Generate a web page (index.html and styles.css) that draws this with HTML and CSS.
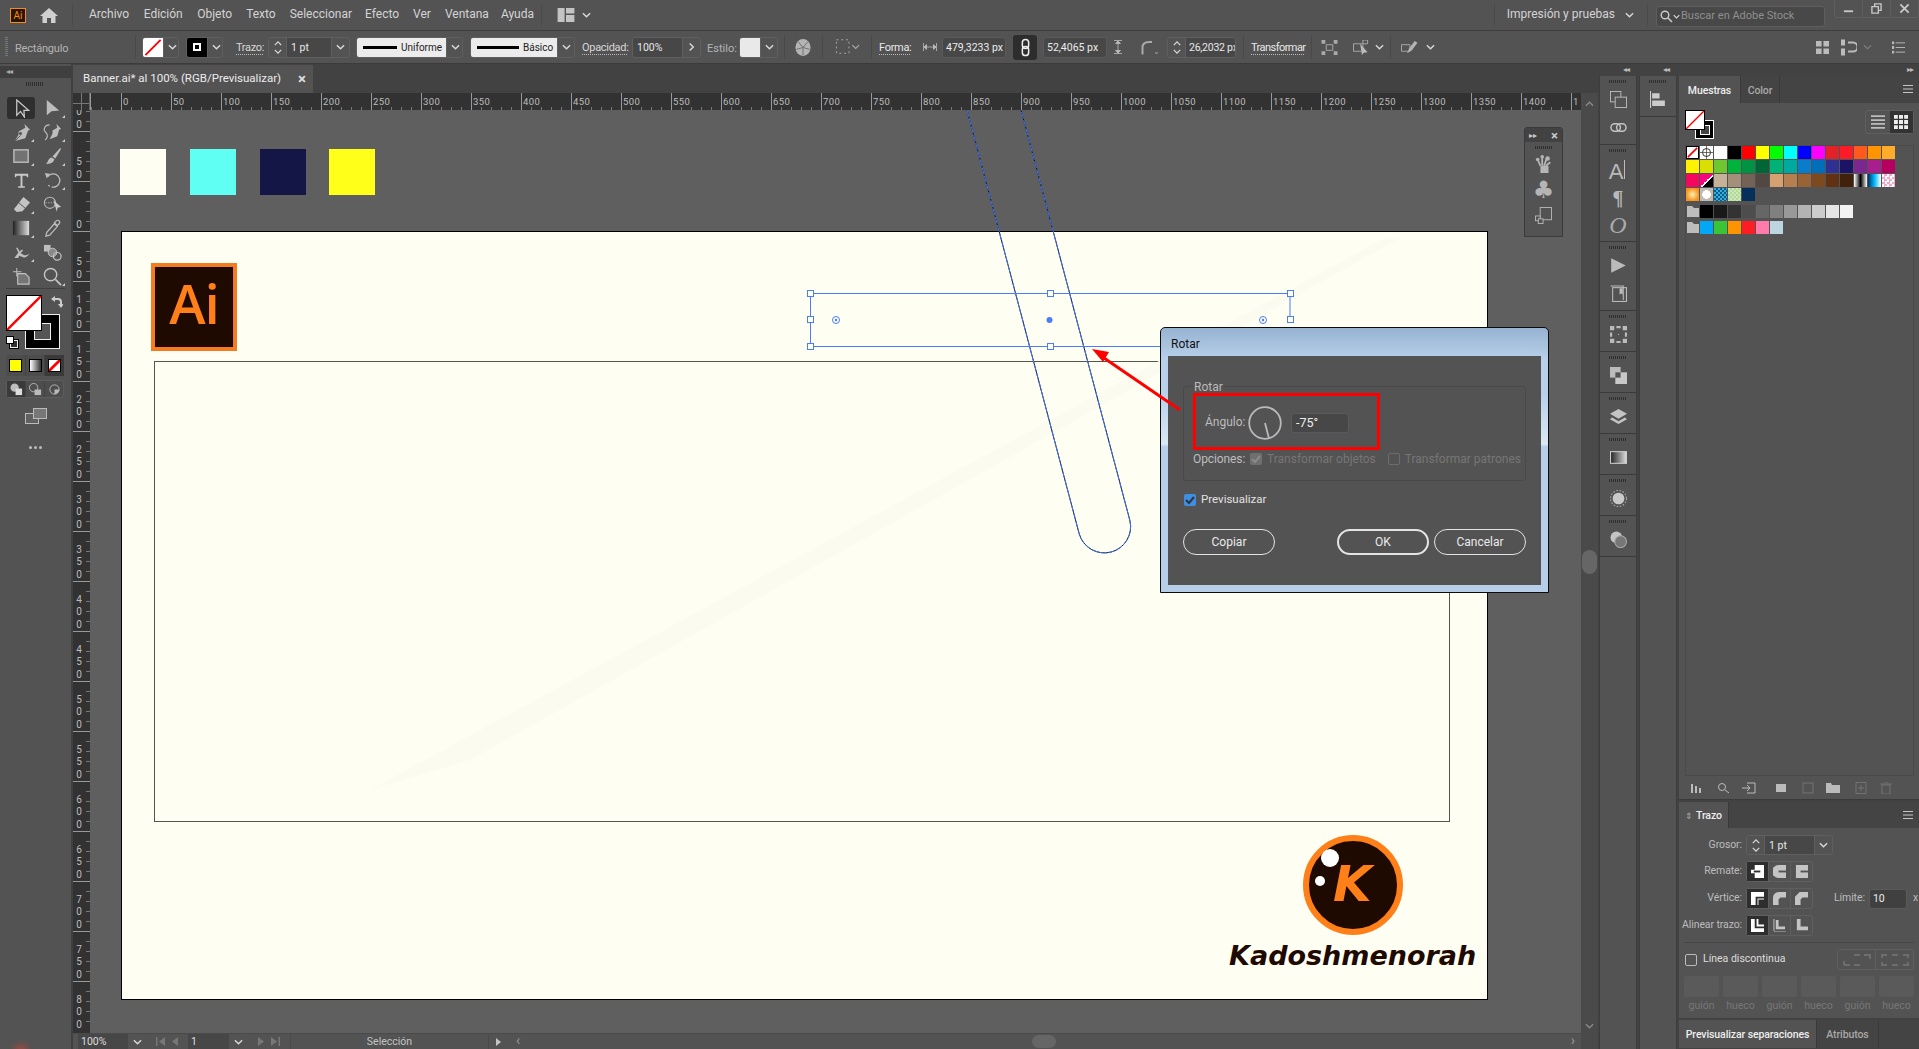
FILE: index.html
```html
<!DOCTYPE html>
<html lang="es">
<head>
<meta charset="utf-8">
<title>Banner.ai</title>
<link rel="stylesheet" href="styles.css">
</head>
<body>
<svg class="defs" width="0" height="0" aria-hidden="true">
  <symbol id="chev" viewBox="0 0 10 6"><path d="M1 1l4 4 4-4" fill="none" stroke="currentColor" stroke-width="1.6"/></symbol>
  <symbol id="up" viewBox="0 0 10 6"><path d="M1 5l4-4 4 4" fill="none" stroke="currentColor" stroke-width="1.6"/></symbol>
  <symbol id="lay" viewBox="0 0 12 10"><path d="M0 0h5v10H0zM6 0h6v4H6zM6 5h6v5H6z" fill="currentColor"/></symbol>
  <symbol id="burger" viewBox="0 0 10 8"><path d="M0 .5h10M0 4h10M0 7.500h10" stroke="currentColor"/></symbol>
  <symbol id="folder" viewBox="0 0 14 13"><path d="M1 1h5l2 2h5v9H1z" fill="#bdbdbd"/></symbol>
</svg>
<div class="app">
  <header class="menubar">
    <span class="ai-mini">Ai</span>
    <svg class="home" viewBox="0 0 18 15"><path d="M9 0l9 8h-2.500v7H11v-5H7v5H2.500V8H0z" fill="currentColor"/></svg>
    <span class="vsep home-sep"></span>
    <nav class="menus">
      <span class="m2">Archivo</span><span class="m2">Edición</span><span>Objeto</span><span>Texto</span><span class="m5">Seleccionar</span><span>Efecto</span><span>Ver</span><span class="m8">Ventana</span><span>Ayuda</span>
    </nav>
    <span class="vsep lay-sep"></span>
    <svg class="lay"><use href="#lay"/></svg>
    <svg class="chev lay-chev"><use href="#chev"/></svg>
    <span class="spacer"></span>
    <span class="vsep"></span>
    <span class="workspace">Impresión y pruebas</span>
    <svg class="chev ws-chev"><use href="#chev"/></svg>
    <span class="vsep ws-sep"></span>
    <div class="stock">
      <svg class="stock-ico" viewBox="0 0 13 13"><circle cx="5" cy="5" r="3.800" fill="none" stroke="currentColor" stroke-width="1.400"/><path d="M8 8l4 4" stroke="currentColor" stroke-width="1.600"/></svg>
      <svg class="chev"><use href="#chev"/></svg>
      <span>Buscar en Adobe Stock</span>
    </div>
    <div class="winbtns">
      <span><svg viewBox="0 0 12 12"><path d="M1 8h10v2H1z" fill="currentColor"/></svg></span>
      <span><svg viewBox="0 0 12 12"><path d="M1 4h7v7H1zM4 4V1h7v7H8" fill="none" stroke="currentColor" stroke-width="1.500"/></svg></span>
      <span><svg viewBox="0 0 12 12"><path d="M1.500 1.500l9 9M10.500 1.500l-9 9" stroke="currentColor" stroke-width="2"/></svg></span>
    </div>
  </header>

  <section class="ctl">
    <span class="grip-v"></span>
    <span class="lbl dim name">Rectángulo</span>
    <span class="sep"></span>
    <div class="combo ml6 w37">
      <span class="swatch-none"><svg viewBox="0 0 20 20"><path d="M2 18L18 2" stroke="#f00" stroke-width="2"/></svg></span>
      <span class="drop"><svg class="chev"><use href="#chev"/></svg></span>
    </div>
    <div class="combo ml7 w37">
      <span class="swatch-stroke"><i></i></span>
      <span class="drop"><svg class="chev"><use href="#chev"/></svg></span>
    </div>
    <span class="lbl dotted ml13 w27">Trazo:</span>
    <div class="combo ml5 w82">
      <span class="stepper"><svg class="chev"><use href="#up"/></svg><svg class="chev"><use href="#chev"/></svg></span>
      <span class="val grow">1 pt</span>
      <span class="drop"><svg class="chev"><use href="#chev"/></svg></span>
    </div>
    <div class="combo ml6 w107">
      <span class="lineopt w89"><b class="w34"></b>Uniforme</span>
      <span class="drop"><svg class="chev"><use href="#chev"/></svg></span>
    </div>
    <div class="combo ml7 w105">
      <span class="lineopt w86"><b class="w42"></b>Básico</span>
      <span class="drop"><svg class="chev"><use href="#chev"/></svg></span>
    </div>
    <span class="lbl dotted ml7 w45">Opacidad:</span>
    <div class="combo ml5 w69">
      <span class="val grow">100%</span>
      <span class="drop"><svg class="chev rot"><use href="#chev"/></svg></span>
    </div>
    <span class="lbl dim ml6 w26">Estilo:</span>
    <div class="combo ml6 w39">
      <span class="swatch-light"></span>
      <span class="drop grow"><svg class="chev"><use href="#chev"/></svg></span>
    </div>
    <span class="sep ml6"></span>
    <svg class="ic16 ml10" viewBox="0 0 16 18"><ellipse cx="8" cy="9" rx="8" ry="9" fill="#b4b4b4"/><path d="M8 9L3 3M8 9l5-6M8 9v8M8 9L1 11M8 9l7 2" stroke="#6f6f6f"/></svg>
    <span class="sep ml11"></span>
    <svg class="ic20 ml12" viewBox="0 0 26 18"><rect x="1.500" y="1.500" width="13" height="14" fill="none" stroke="#aaa" stroke-dasharray="2 3"/><path d="M18 7l3.500 3.500L25 7" fill="none" stroke="#aaa" stroke-width="1.200"/></svg>
    <span class="sep ml11"></span>
    <span class="lbl dotted bright ml7 w31">Forma:</span>
    <svg class="ic14 ml13" viewBox="0 0 14 8"><path d="M.5 0v8M13.500 0v8M1 4h12M3.500 1.500v5L1 4zM10.500 1.500v5L13 4z" fill="#bbb" stroke="#bbb" stroke-width=".8"/></svg>
    <span class="input ml5 w64">479,3233 px</span>
    <span class="link ml7"><svg viewBox="0 0 10 20"><rect x="1.500" y="1" width="7" height="10" rx="3.500" fill="none" stroke="#eee" stroke-width="1.700"/><rect x="1.500" y="9" width="7" height="10" rx="3.500" fill="none" stroke="#eee" stroke-width="1.700"/></svg></span>
    <span class="input ml6 w64">52,4065 px</span>
    <svg class="ic8 ml7" viewBox="0 0 8 14"><path d="M0 .5h8M0 13.500h8M4 1v12M1.500 3.500h5L4 1zM1.500 10.500h5L4 13z" fill="#bbb" stroke="#bbb" stroke-width=".8"/></svg>
    <svg class="ic17 ml19" viewBox="0 0 17 14"><path d="M1.500 14V7Q1.500 1.500 8 1.500h3" fill="none" stroke="#aaa" stroke-width="2"/><path d="M14 13h3v-1h-3z" fill="#aaa"/></svg>
    <div class="combo ml9 w69">
      <span class="stepper"><svg class="chev"><use href="#up"/></svg><svg class="chev"><use href="#chev"/></svg></span>
      <span class="val clip">26,2032 px</span>
    </div>
    <span class="sep ml7"></span>
    <span class="lbl dotted bright tight ml7 w53">Transformar</span>
    <span class="sep ml7"></span>
    <svg class="ic17 ml9" viewBox="0 0 17 16"><path d="M5 5h7v6H5z" fill="none" stroke="#aaa"/><path d="M0 0h4v4H0zM13 0h4v4h-4zM0 12h4v4H0zM13 12h4v4h-4z" fill="#aaa"/></svg>
    <svg class="ic17 ml15" viewBox="0 0 17 16"><path d="M0 4h10v8H0z" fill="none" stroke="#aaa"/><path d="M7 4l8 9-4 .5-2 2.500z" fill="#bbb"/><path d="M10 0h5v4h-5z" fill="none" stroke="#aaa"/></svg>
    <svg class="chev ml5"><use href="#chev"/></svg>
    <span class="sep ml6"></span>
    <svg class="ic17 ml10" viewBox="0 0 17 16"><path d="M0 5h9v7H0z" fill="none" stroke="#aaa"/><path d="M6 14l2-5 6-8 3 2-6 8z" fill="#b5b5b5"/></svg>
    <svg class="chev ml8"><use href="#chev"/></svg>
    <span class="spacer"></span>
    <svg class="ic13 rgt1" viewBox="0 0 14 14"><path d="M0 0h6v6H0zM8 0h6v6H8zM0 8h6v6H0zM8 8h6v6H8z" fill="#bbb"/></svg>
    <svg class="ic16 rgt2" viewBox="0 0 16 16"><path d="M0 0h4v6H0zM0 9h4v7H0z" fill="#bbb"/><path d="M7 3h5a3 3 0 010 9H7" fill="none" stroke="#bbb" stroke-width="2"/></svg>
    <svg class="chev rgt3 faint"><use href="#chev"/></svg>
    <svg class="ic13 rgt4" viewBox="0 0 14 12"><path d="M0 0h2v2H0zM4 1h10M0 5h2v2H0zM4 6h10M0 10h2v2H0zM4 11h10" stroke="#bbb" fill="#bbb"/></svg>
  </section>

  <main class="main">
    <aside class="tools">
      <div class="tools-head"><span class="arrows">◂◂</span></div>
      <div class="grip g-tools"></div>
      <div class="toolgrid">
        <span class="tool on"><svg viewBox="0 0 20 20"><path d="M5 1v16l4-4 4 6-.5-7h5z" fill="none" stroke="#ccc" stroke-width="1.300"/></svg></span>
        <span class="tool"><svg viewBox="0 0 20 20"><path d="M4 1v16l5-4 8-1z" fill="#bdbdbd"/></svg><u></u></span>
        <span class="tool"><svg viewBox="0 0 20 20"><path d="M13 1l6 6-2 1-3 8-11 3 4-7 0-3 7-4z" fill="#bdbdbd"/><path d="M3 19l6-6" stroke="#535353"/><circle cx="9" cy="11" r="1.500" fill="#535353"/></svg><u></u></span>
        <span class="tool"><svg viewBox="0 0 20 20"><path d="M14 1l5 5-2 1-2 7-8 3 3-6 0-3 5-3z" fill="#bdbdbd"/><path d="M7 2C1 2 0 8 3 10c3 3 1 7-1 8" fill="none" stroke="#bdbdbd" stroke-width="1.200"/></svg><u></u></span>
        <span class="tool"><svg viewBox="0 0 20 20"><rect x="2" y="3" width="15" height="13" fill="#727272" stroke="#c2c2c2" stroke-width="1.400"/></svg><u></u></span>
        <span class="tool"><svg viewBox="0 0 20 20"><path d="M18 1l1 1-6 10-3-2zM9 11l3 2c-1 4-5 5-9 5 2-1 2-6 6-7z" fill="#bdbdbd"/></svg><u></u></span>
        <span class="tool"><svg viewBox="0 0 20 20"><path d="M3 3h14v3.500h-1L15 5h-4v11h2.500v1.500h-7V16H9V5H5L4 6.500H3z" fill="#c9c9c9"/></svg><u></u></span>
        <span class="tool"><svg viewBox="0 0 20 20"><path d="M5 6a7 7 0 11-1 6" fill="none" stroke="#bdbdbd" stroke-width="1.300" stroke-dasharray="30 2 2"/><path d="M2 2l5 1-3 5z" fill="#bdbdbd"/></svg><u></u></span>
        <span class="tool"><svg viewBox="0 0 20 20"><path d="M12 2l7 6-8 9-6 1-3-3z" fill="#c4c4c4"/><path d="M7 8l7 6" stroke="#535353"/></svg><u></u></span>
        <span class="tool"><svg viewBox="0 0 22 20"><circle cx="8" cy="8" r="6.500" fill="none" stroke="#bdbdbd" stroke-width="1.200"/><path d="M3 8h10" stroke="#bdbdbd" stroke-dasharray="1.500 1.500"/><path d="M12 5l9 8-4 .5-1 5z" fill="#c9c9c9"/></svg></span>
        <span class="tool"><svg viewBox="0 0 20 20"><defs><linearGradient id="gt"><stop offset="0" stop-color="#222"/><stop offset="1" stop-color="#ddd"/></linearGradient></defs><rect x="1" y="2" width="17" height="15" fill="url(#gt)"/></svg><u></u></span>
        <span class="tool"><svg viewBox="0 0 20 20"><path d="M14 2c2-2 5 1 3 3l-2 2-3-3zM12 5l3 3-8 9-4 1 1-4z" fill="none" stroke="#bdbdbd" stroke-width="1.300"/></svg></span>
        <span class="tool"><svg viewBox="0 0 24 20"><path d="M5 4l3 6-5 7h5l1-3 5 2c3 1 6-1 8-5-2 2-4 3-7 2l-4-2 3-4c-2-1-3 0-4 2L7 4z" fill="#bdbdbd"/></svg><u></u></span>
        <span class="tool"><svg viewBox="0 0 20 20"><path d="M1 2h7v7H1z" fill="#bdbdbd"/><circle cx="10" cy="10" r="4.500" fill="#8a8a8a" stroke="#c4c4c4"/><circle cx="15" cy="14" r="4" fill="none" stroke="#c4c4c4" stroke-width="1.300"/></svg></span>
        <span class="tool"><svg viewBox="0 0 20 20"><path d="M6 7h8l4 4v7H6z" fill="#757575" stroke="#c2c2c2" stroke-width="1.200"/><path d="M5 1v9M1 5h9" stroke="#c2c2c2"/></svg></span>
        <span class="tool"><svg viewBox="0 0 20 20"><circle cx="8" cy="8" r="6.500" fill="none" stroke="#c4c4c4" stroke-width="1.500"/><path d="M13 13l6 6" stroke="#c4c4c4" stroke-width="1.800"/></svg><u></u></span>
      </div>
      <div class="rule"></div>
      <div class="fillstroke">
        <span class="fs-stroke"><i></i></span>
        <span class="fs-fill"><svg viewBox="0 0 36 36"><path d="M0 36L36 0" stroke="#f00" stroke-width="2.500"/></svg></span>
        <svg class="fs-swap" viewBox="0 0 12 12"><path d="M1 3h6q3 0 3 3v5" fill="none" stroke="#ccc" stroke-width="2"/><path d="M4 0v6L0 3zM7 8h6l-3 4z" fill="#ccc"/></svg>
        <span class="fs-def"><b></b><em></em></span>
      </div>
      <div class="segs colormodes">
        <span><i class="cm-yellow"></i></span>
        <span><i class="cm-grad"></i></span>
        <span class="seg-on"><i class="cm-none"><svg viewBox="0 0 12 12"><path d="M0 12L12 0" stroke="#f00" stroke-width="3"/></svg></i></span>
      </div>
      <div class="segs drawmodes">
        <span class="seg-on"><svg viewBox="0 0 14 14"><circle cx="5" cy="5" r="4.500" fill="#bdbdbd"/><rect x="6" y="6" width="7" height="7" fill="#ddd"/></svg></span>
        <span><svg viewBox="0 0 14 14"><circle cx="5" cy="5" r="4.500" fill="none" stroke="#bbb"/><rect x="6" y="7" width="7" height="6" fill="#bbb"/></svg></span>
        <span><svg viewBox="0 0 14 14"><circle cx="7" cy="7" r="5" fill="none" stroke="#bbb"/><path d="M7 7h5a5 5 0 01-5 5z" fill="#bbb"/></svg></span>
      </div>
      <svg class="screenmode" viewBox="0 0 22 16"><rect x=".5" y="5.500" width="13" height="10" fill="#606060" stroke="#bbb"/><rect x="8.500" y=".5" width="13" height="10" fill="#777" stroke="#bbb"/></svg>
      <div class="more"><i></i><i></i><i></i></div>
      <span class="glow"></span>
    </aside>

    <section class="doc">
      <div class="tabrow">
        <div class="tab"><span>Banner.ai* al 100% (RGB/Previsualizar)</span><b>×</b></div>
      </div>
      <div class="docbody">
        <div class="docmain">
          <div class="rulerrow">
            <div class="corner"></div>
            <div class="hruler">
              <span class="hfirst"></span><span>0</span><span>50</span><span>100</span><span>150</span><span>200</span><span>250</span><span>300</span><span>350</span><span>400</span><span>450</span><span>500</span><span>550</span><span>600</span><span>650</span><span>700</span><span>750</span><span>800</span><span>850</span><span>900</span><span>950</span><span>1000</span><span>1050</span><span>1100</span><span>1150</span><span>1200</span><span>1250</span><span>1300</span><span>1350</span><span>1400</span><span>1</span>
            </div>
          </div>
          <div class="canvasrow">
            <div class="vruler">
              <div class="vinner">
                <span>100</span><span>50</span><span>0</span><span>50</span><span>100</span><span>150</span><span>200</span><span>250</span><span>300</span><span>350</span><span>400</span><span>450</span><span>500</span><span>550</span><span>600</span><span>650</span><span>700</span><span>750</span><span>800</span>
              </div>
            </div>
            <div class="canvas">
              <span class="cs cs1"></span><span class="cs cs2"></span><span class="cs cs3"></span><span class="cs cs4"></span>
              <div class="artboard">
                <div class="ailogo">Ai</div>
                <div class="innerbox"></div>
                <div class="klogo"><i class="b1"></i><i class="b2"></i><span>K</span></div>
                <div class="kname">Kadoshmenorah</div>
              </div>
              <svg class="overlay" viewBox="90 110 1491 923">
                <polygon points="370,790 1385,238 1400,238 470,760" fill="#fbfbef"/>
                <path d="M967 110L1079.200 533.800A26.200 26.200 0 0 0 1129.800 520.200L1021 110" fill="none" stroke="#111" stroke-width="1"/>
                <path d="M967 110L1079.200 533.800A26.200 26.200 0 0 0 1129.800 520.200L1021 110" fill="none" stroke="#3f74ff" stroke-width="1" stroke-dasharray="7 1.500"/>
                <path d="M810.500 293.500H1290V320M810.500 293.500V346.500H1170" fill="none" stroke="#4a7cff" stroke-width="1"/>
                <g fill="#fff" stroke="#4a7cff">
                  <rect x="807.500" y="290.500" width="6" height="6"/><rect x="1047.500" y="290.500" width="6" height="6"/><rect x="1287.500" y="290.500" width="6" height="6"/>
                  <rect x="807.500" y="316.500" width="6" height="6"/><rect x="1287.500" y="316.500" width="6" height="6"/>
                  <rect x="807.500" y="343.500" width="6" height="6"/><rect x="1047.500" y="343.500" width="6" height="6"/>
                  <circle cx="836" cy="320" r="3.500" fill="none"/><circle cx="1263" cy="320" r="3.500" fill="none"/>
                </g>
                <circle cx="836" cy="320" r="1.200" fill="#4a7cff"/><circle cx="1263" cy="320" r="1.200" fill="#4a7cff"/><circle cx="1049.500" cy="320" r="3" fill="#4a7cff"/>
              </svg>

              <div class="floatpanel">
                <div class="fp-head"><span>▸▸</span><b>×</b></div>
                <div class="grip g-fp"></div>
                <svg class="fp-ic" viewBox="0 0 20 22"><path d="M6 13h9v8H6z" fill="#b5b5b5"/><path d="M8 13V3M10 13L13 5M12 13l5-4M6 13L3 6" stroke="#b5b5b5" stroke-width="2"/><circle cx="8" cy="3" r="2" fill="#b5b5b5"/><circle cx="14" cy="5" r="2.500" fill="#b5b5b5"/><circle cx="3" cy="6" r="2" fill="#b5b5b5"/></svg>
                <span class="fp-club">♣</span>
                <svg class="fp-ic fp-last" viewBox="0 0 18 18"><rect x="5.500" y=".5" width="12" height="13" fill="none" stroke="#b5b5b5"/><rect x=".5" y="9.500" width="5" height="5" fill="#535353" stroke="#b5b5b5"/><rect x="3.500" y="12.500" width="5" height="5" fill="#535353" stroke="#b5b5b5"/></svg>
              </div>

              <div class="dialog">
                <div class="dlg-title">Rotar</div>
                <div class="dlg-body">
                  <div class="fieldset">
                    <span class="legend">Rotar</span>
                    <div class="anglerow">
                      <span class="anglelbl">Ángulo:</span>
                      <svg class="dial" viewBox="0 0 34 34"><circle cx="17" cy="17" r="15.800" fill="none" stroke="#b9b9b9" stroke-width="1.800"/><path d="M17 17l4 15.500" stroke="#b9b9b9" stroke-width="1.800"/></svg>
                      <span class="angleinput">-75°</span>
                    </div>
                    <div class="optrow">
                      <span class="optlbl">Opciones:</span>
                      <span class="chk chk-dis"><svg viewBox="0 0 12 12"><path d="M2 6l3 3 5-6" fill="none" stroke="#8a8a8a" stroke-width="2"/></svg></span>
                      <span class="optdis">Transformar objetos</span>
                      <span class="chk chk-empty"></span>
                      <span class="optdis">Transformar patrones</span>
                    </div>
                    <span class="redbox"></span>
                  </div>
                  <div class="prevrow">
                    <span class="chk chk-blue"><svg viewBox="0 0 12 12"><path d="M2 6l3 3 5-6" fill="none" stroke="#333" stroke-width="2"/></svg></span>
                    <span>Previsualizar</span>
                  </div>
                  <div class="btnrow">
                    <span class="btn">Copiar</span>
                    <span class="btn btn-def">OK</span>
                    <span class="btn">Cancelar</span>
                  </div>
                </div>
              </div>
              <svg class="overlay" viewBox="90 110 1491 923">
                <path d="M1180 410L1104 358" stroke="#f00" stroke-width="3"/>
                <path d="M1092 349l17 3-6 10z" fill="#f00"/>
              </svg>
            </div>
          </div>
          <div class="status">
            <span class="st-zoom">100%</span><span class="st-drop"><svg class="chev"><use href="#chev"/></svg></span>
            <span class="st-nav"><svg viewBox="0 0 22 9"><path d="M0 0h1.500v9H0zM9 0v9L3 4.500zM22 0v9l-6-4.500z" fill="#777"/></svg></span>
            <span class="st-page">1</span><span class="st-drop"><svg class="chev"><use href="#chev"/></svg></span>
            <span class="st-nav nav2"><svg viewBox="0 0 22 9"><path d="M0 0l6 4.500L0 9zM13 0l6 4.500L13 9zM20.500 0H22v9h-1.500z" fill="#777"/></svg></span>
            <span class="st-tool">Selección</span>
            <span class="st-tri"></span>
            <span class="st-left">‹</span>
            <span class="st-thumb"></span>
            <span class="st-right">›</span>
          </div>
        </div>
        <div class="vscroll">
          <svg class="chev vs-up"><use href="#up"/></svg>
          <span class="vs-thumb"></span>
          <svg class="chev vs-down"><use href="#chev"/></svg>
        </div>
      </div>
    </section>

    <aside class="dock">
      <div class="dock-head"><span class="da1">◂◂</span><span class="da2">◂◂</span><span class="da3">▸▸</span></div>
      <div class="dock-cols">
        <div class="icol">
          <div class="igroup h69"><i class="grip"></i>
            <svg class="di" viewBox="0 0 18 18"><rect x=".5" y=".5" width="11" height="11" fill="none" stroke="#bbb"/><rect x="5.500" y="6.500" width="12" height="11" fill="#535353" stroke="#bbb"/></svg>
            <svg class="di mt8" viewBox="0 0 18 10"><rect x="1" y="1" width="10" height="8" rx="4" fill="none" stroke="#c4c4c4" stroke-width="1.500"/><rect x="7" y="1" width="10" height="8" rx="4" fill="none" stroke="#c4c4c4" stroke-width="1.500"/></svg>
          </div>
          <div class="igroup h97"><i class="grip"></i>
            <span class="di-a">A<u></u></span>
            <span class="di-p">¶</span>
            <span class="di-o">O</span>
          </div>
          <div class="igroup h69"><i class="grip"></i>
            <svg class="di" viewBox="0 0 14 14"><path d="M1 1l12 6-12 6z" fill="#bbb"/></svg>
            <svg class="di mt8" viewBox="0 0 16 16"><path d="M.5 1h12v13" fill="none" stroke="#bbb"/><rect x="2.500" y="2.500" width="13" height="13" fill="none" stroke="#bbb"/><path d="M9 3h3v6l-1.500-1L9 9z" fill="#bbb"/></svg>
          </div>
          <div class="igroup h41"><i class="grip"></i><svg class="di" viewBox="0 0 16 16"><path d="M0 0h4v4H0zM12 0h4v4h-4zM0 12h4v4H0zM12 12h4v4h-4zM6 0h4v2H6zM6 14h4v2H6zM0 6h2v4H0zM14 6h2v4h-2z" fill="#bbb"/><path d="M7.500 7.500h1v1h-1z" fill="#bbb"/></svg></div>
          <div class="igroup h41"><i class="grip"></i><svg class="di" viewBox="0 0 16 16"><path d="M0 0h10v10H0z" fill="#bbb"/><path d="M5 5h11v11H5z" fill="#c8c8c8"/><path d="M5 5h5v5H5z" fill="#535353"/></svg></div>
          <div class="igroup h41"><i class="grip"></i><svg class="di" viewBox="0 0 16 16"><path d="M8 1l8 4.500L8 10 0 5.500z" fill="#c4c4c4"/><path d="M2 9l6 3.500L14 9l2 1.500L8 15l-8-4.500z" fill="#c4c4c4"/></svg></div>
          <div class="igroup h41"><i class="grip"></i><svg class="di" viewBox="0 0 16 12"><defs><linearGradient id="gd"><stop offset="0" stop-color="#222"/><stop offset="1" stop-color="#ddd"/></linearGradient></defs><rect x=".5" y=".5" width="15" height="11" fill="url(#gd)" stroke="#ccc"/></svg></div>
          <div class="igroup h41"><i class="grip"></i><svg class="di" viewBox="0 0 16 16"><circle cx="8" cy="8" r="5.500" fill="#c9c9c9"/><circle cx="8" cy="8" r="7.500" fill="none" stroke="#aaa" stroke-dasharray="1.500 1.500"/></svg></div>
          <div class="igroup h41"><i class="grip"></i><svg class="di" viewBox="0 0 16 16"><circle cx="6" cy="6" r="5.500" fill="#c4c4c4"/><circle cx="10" cy="10" r="5.500" fill="#777" stroke="#aaa"/></svg></div>
        </div>
        <div class="icol col2">
          <div class="igroup h41"><i class="grip"></i><svg class="di" viewBox="0 0 16 16"><path d="M.5 0v16" stroke="#ccc"/><path d="M2 2h7v5H2zM2 9h12v5H2z" fill="#ccc"/></svg></div>
        </div>
        <div class="panels">
          <section class="swatches">
            <div class="ptabs">
              <span class="ptab on w62">Muestras</span>
              <span class="ptab w39">Color</span>
              <span class="spacer"></span>
              <svg class="burger"><use href="#burger"/></svg>
            </div>
            <div class="sw-top">
              <div class="mini">
                <span class="mini-s"><i></i></span>
                <span class="mini-f"><svg viewBox="0 0 19 19"><path d="M0 19L19 0" stroke="#f00" stroke-width="1.500"/></svg></span>
              </div>
              <div class="viewbtns">
                <span><svg viewBox="0 0 12 12"><path d="M0 1h12M0 4.300h12M0 7.700h12M0 11h12" stroke="#bbb" stroke-width="1.500"/></svg></span>
                <span class="on"><svg viewBox="0 0 12 12"><path d="M0 0h3.300v3.300H0zM4.300 0h3.400v3.300H4.300zM8.700 0H12v3.300H8.700zM0 4.300h3.300v3.400H0zM4.300 4.300h3.400v3.400H4.300zM8.700 4.300H12v3.400H8.700zM0 8.700h3.300V12H0zM4.300 8.700h3.400V12H4.300zM8.700 8.700H12V12H8.700z" fill="#eee"/></svg></span>
              </div>
            </div>
            <div class="sw-box">
              <div class="swgrid">
                <span class="s-none"><svg viewBox="0 0 13 13"><path d="M1 12L12 1" stroke="#f00" stroke-width="2"/></svg></span>
                <span class="s-reg"><svg viewBox="0 0 13 13"><circle cx="6.500" cy="6.500" r="4" fill="none" stroke="#333"/><path d="M6.500 0v13M0 6.500h13" stroke="#333" stroke-width=".7"/></svg></span>
                <span style="background:#fff"></span><span style="background:#000"></span><span style="background:#f00"></span><span style="background:#ff0"></span><span style="background:#0f0"></span><span style="background:#0ff"></span><span style="background:#00f"></span><span style="background:#f0f"></span><span style="background:#e12229"></span><span style="background:#fe1b28"></span><span style="background:#ff5a1e"></span><span style="background:#ff9400"></span><span style="background:#ffac2a"></span>
                <span style="background:#fff200"></span><span style="background:#d9e000"></span><span style="background:#6cc730"></span><span style="background:#00b33c"></span><span style="background:#009344"></span><span style="background:#006638"></span><span style="background:#00b275"></span><span style="background:#00a99d"></span><span style="background:#0a7dca"></span><span style="background:#006fba"></span><span style="background:#2e3192"></span><span style="background:#1b1464"></span><span style="background:#7a288f"></span><span style="background:#a91e8e"></span><span style="background:#b5005f"></span>
                <span style="background:#f7065f"></span><span class="s-split"></span><span style="background:#c7b299"></span><span style="background:#a38f7a"></span><span style="background:#736357"></span><span style="background:#534741"></span><span style="background:#d6a16f"></span><span style="background:#b57f4f"></span><span style="background:#996336"></span><span style="background:#7d4a1f"></span><span style="background:#603213"></span><span style="background:#42210b"></span><span class="s-gbw"></span><span class="s-gbl"></span><span class="s-chk"></span>
                <span class="s-rad"></span><span class="s-dots"></span><span class="s-pblue"></span><span class="s-pgreen"></span><span style="background:#06305a"></span>
              </div>
              <div class="swgroup">
                <svg class="fold"><use href="#folder"/></svg>
                <span style="background:#000"></span><span style="background:#191919"></span><span style="background:#333"></span><span style="background:#4d4d4d"></span><span style="background:#666"></span><span style="background:#808080"></span><span style="background:#999"></span><span style="background:#b3b3b3"></span><span style="background:#ccc"></span><span style="background:#e6e6e6"></span><span style="background:#f2f2f2"></span>
              </div>
              <div class="swgroup">
                <svg class="fold"><use href="#folder"/></svg>
                <span style="background:#00a8f5"></span><span style="background:#39c536"></span><span style="background:#ff9300"></span><span style="background:#ff1d25"></span><span style="background:#ff7bac"></span><span style="background:#bdd5de"></span>
              </div>
            </div>
            <div class="sw-foot">
              <svg viewBox="0 0 14 12" class="ml11"><path d="M1 11V2h2v9zM5 11V4h2v7zM9 11V6h2v5z" fill="#bbb"/></svg>
              <svg viewBox="0 0 14 12" class="ml13"><circle cx="5" cy="5" r="3.500" fill="none" stroke="#bbb"/><path d="M8 8l4 3" stroke="#bbb"/></svg>
              <svg viewBox="0 0 14 12" class="ml11"><path d="M5 1h8v10H5M0 6h8M5 3l3 3-3 3" fill="none" stroke="#bbb"/></svg>
              <svg viewBox="0 0 14 12" class="ml19"><path d="M1 2h10v8H1z" fill="#bbb"/></svg>
              <svg viewBox="0 0 14 12" class="ml13 fnt"><rect x="1" y="1" width="10" height="10" fill="none" stroke="#888"/></svg>
              <svg viewBox="0 0 14 12" class="ml10"><path d="M0 1h5l1 2h8v8H0z" fill="#bbb"/></svg>
              <svg viewBox="0 0 14 12" class="ml14 fnt"><path d="M2 .5h10v11H2zM7 3v6M4 6h6" fill="none" stroke="#888"/></svg>
              <svg viewBox="0 0 14 12" class="ml11 fnt"><path d="M3 3h8v9H3zM1 2h12M5 0h4" fill="none" stroke="#888"/></svg>
            </div>
          </section>

          <section class="stroke">
            <div class="ptabs">
              <span class="ptab on w50"><em>⇕</em>Trazo</span>
              <span class="spacer"></span>
              <svg class="burger"><use href="#burger"/></svg>
            </div>
            <div class="st-row r1">
              <label>Grosor:</label>
              <div class="combo w87">
                <span class="stepper"><svg class="chev"><use href="#up"/></svg><svg class="chev"><use href="#chev"/></svg></span>
                <span class="val grow">1 pt</span>
                <span class="drop"><svg class="chev"><use href="#chev"/></svg></span>
              </div>
            </div>
            <div class="st-row r2">
              <label>Remate:</label>
              <div class="seg3">
                <span class="on"><svg viewBox="0 0 14 14"><path d="M4 0h10v14H4V9H0V5h4z" fill="#fff"/><path d="M3 6h7v2H3z" fill="#2c2c2c"/></svg></span>
                <span><svg viewBox="0 0 14 14"><path d="M6 0h8v14H6a7 7 0 010-14z" fill="#c4c4c4"/><path d="M6 6h8v2H6z" fill="#535353"/></svg></span>
                <span><svg viewBox="0 0 14 14"><path d="M1 0h13v14H1z" fill="#c4c4c4"/><path d="M6 6h8v2H6z" fill="#535353"/></svg></span>
              </div>
            </div>
            <div class="st-row r2">
              <label>Vértice:</label>
              <div class="seg3">
                <span class="on"><svg viewBox="0 0 14 14"><path d="M0 0h14v6H6v8H0z" fill="#fff"/><path d="M5 5h9v3H9v6H5z" fill="#2c2c2c"/><path d="M7 7h7v1H8v6H7z" fill="#fff"/></svg></span>
                <span><svg viewBox="0 0 14 14"><path d="M0 14V6a6 6 0 016-6h8v6H8l-2 2v6z" fill="#c4c4c4"/></svg></span>
                <span><svg viewBox="0 0 14 14"><path d="M0 14V5l5-5h9v6H8L6 8v6z" fill="#c4c4c4"/></svg></span>
              </div>
              <label class="lim">Límite:</label>
              <span class="input lim-i">10</span>
              <span class="lim-x">x</span>
            </div>
            <div class="st-row r2">
              <label>Alinear trazo:</label>
              <div class="seg3">
                <span class="on"><svg viewBox="0 0 14 14"><path d="M0 0h4v10h10v4H0zM6 0h2v6h6v2H6z" fill="#fff"/></svg></span>
                <span><svg viewBox="0 0 14 14"><path d="M3 1h3v7h7v3H3z" fill="#c4c4c4"/><path d="M1 0v12c0 1 1 2 2 2h11" fill="none" stroke="#c4c4c4"/></svg></span>
                <span><svg viewBox="0 0 14 14"><path d="M2 0h4v8h8v4H2z" fill="#c4c4c4"/></svg></span>
              </div>
            </div>
            <div class="st-div"></div>
            <div class="dashrow">
              <span class="chk chk-plain"></span>
              <span class="dashlbl">Línea discontinua</span>
              <span class="spacer"></span>
              <div class="dashbtns">
                <span><svg viewBox="0 0 28 12"><path d="M1 11V7M1 11h6M11 1h6M21 1h6V5M11 11h6" stroke="#777" fill="none" stroke-width="1.500"/></svg></span>
                <span><svg viewBox="0 0 28 12"><path d="M1 4V1h5M1 8v3h5M11 1h6M11 11h6M27 4V1h-5M27 8v3h-5" stroke="#777" fill="none" stroke-width="1.500"/></svg></span>
              </div>
            </div>
            <div class="dashgrid">
              <div><i></i><span>guión</span></div><div><i></i><span>hueco</span></div><div><i></i><span>guión</span></div><div><i></i><span>hueco</span></div><div><i></i><span>guión</span></div><div><i></i><span>hueco</span></div>
            </div>
          </section>

          <div class="ptabs bottomtabs">
            <span class="ptab on w138">Previsualizar separaciones</span>
            <span class="ptab w62">Atributos</span>
          </div>
        </div>
      </div>
    </aside>
  </main>
</div>
</body>
</html>
```
FILE: styles.css
```css
* { box-sizing: border-box; }
html { height: 1049px; overflow: hidden; }
html, body { margin: 0; }
body {
  width: 1919px; height: 1049px; overflow: hidden; background: #535353; color: #d8d8d8;
  font: 11px/1.2 Roboto, "Liberation Sans", sans-serif;
}
.defs { position: absolute; }
svg { display: block; flex: none; }
i, b, u, em { font-style: normal; font-weight: normal; text-decoration: none; }
.spacer { flex: 1; }
.grow { flex: 1; }
.app { display: flex; flex-direction: column; height: 1049px; }
.chev { width: 9px; height: 6px; color: #d8d8d8; }
.rot { transform: rotate(-90deg); }
.faint { color: #777; }

/* menu bar */
.menubar { height: 31px; flex: none; display: flex; align-items: center; border-bottom: 1px solid #3d3d3d; padding-left: 10px; }
.ai-mini { width: 16px; height: 15px; border: 1px solid #f58a1f; background: #2a1500; color: #f58a1f; font-size: 10px; line-height: 13px; text-align: center; }
.home { width: 18px; height: 15px; margin-left: 14px; color: #cfcfcf; }
.vsep { width: 1px; height: 22px; background: #4a4a4a; flex: none; }
.home-sep { margin-left: 14px; }
.menus { display: flex; font-size: 12px; color: #d4d4d4; margin: -2px 0 0 16px; }
.menus span { margin-right: 14px; }
.menus .m2 { margin-right: 14.500px; }
.menus .m5 { margin-right: 13px; }
.menus .m8 { margin-right: 12px; }
.lay-sep { margin-left: -7px; }
.lay { width: 18px; height: 14px; color: #c4c4c4; margin-left: 15px; }
.lay-chev { margin-left: 7px; }
.workspace { margin: -2px 0 0 12px; font-size: 12px; color: #d4d4d4; }
.ws-chev { margin-left: 10px; }
.ws-sep { margin-left: 13px; }
.stock { width: 169px; height: 21px; margin-left: 8px; background: #484848; border: 1px solid #5e5e5e; border-radius: 3px; display: flex; align-items: center; padding-left: 3px; color: #8f8f8f; font-size: 11px; margin-top: 2px; }
.stock-ico { width: 13px; height: 13px; color: #ccc; }
.stock .chev { width: 7px; height: 5px; margin: 0 1px 0 0; }
.winbtns { display: flex; margin-left: 9px; align-self: flex-start; border: 1px solid #5e5e5e; border-top: 0; border-radius: 0 0 3px 3px; height: 18px; width: 85px; }
.winbtns span { flex: 1; border-left: 1px solid #5e5e5e; display: flex; align-items: center; justify-content: center; color: #c8c8c8; }
.winbtns span:first-child { border-left: 0; }
.winbtns svg { width: 11px; height: 11px; }

/* control bar */
.ctl { height: 33px; flex: none; display: flex; align-items: center; border-bottom: 1px solid #3b3b3b; padding-left: 5px; font-size: 11px; }
.grip-v { width: 3px; height: 20px; background: repeating-linear-gradient(#777 0 1px, transparent 1px 2px); }
.lbl { flex: none; white-space: nowrap; line-height: 13px; margin-top: 2px; }
.dim { color: #b4b4b4; }
.bright { color: #e8e8e8; }
.dotted { border-bottom: 1px dotted #bbb; letter-spacing: -.3px; }
.tight { letter-spacing: -.55px; }
.name { margin-left: 7px; width: 120px; letter-spacing: -.2px; }
.sep { width: 1px; height: 24px; background: #494949; flex: none; }
.combo { height: 21px; display: flex; align-items: stretch; border: 1px solid #5f5f5f; border-radius: 3px; flex: none; overflow: hidden; background: #535353; }
.drop { width: 18px; flex: none; display: flex; align-items: center; justify-content: center; border-left: 1px solid #5f5f5f; }
.swatch-none { width: 20px; background: #fff; flex: none; }
.swatch-none svg { width: 100%; height: 100%; }
.swatch-stroke { width: 20px; background: #000; flex: none; display: flex; align-items: center; justify-content: center; }
.swatch-stroke i { width: 8px; height: 8px; border: 2px solid #fff; }
.stepper { width: 18px; flex: none; display: flex; flex-direction: column; justify-content: center; gap: 3px; align-items: center; border-right: 1px solid #5f5f5f; }
.stepper .chev { width: 8px; height: 5px; }
.val { background: #474747; color: #e8e8e8; padding: 0 0 0 4px; line-height: 20px; font-size: 10.500px; }
.clip { flex: 1; overflow: hidden; white-space: nowrap; padding-left: 3px; letter-spacing: -.25px; }
.lineopt { display: flex; align-items: center; background: #ececec; color: #222; flex: none; padding: 1px 0 0 6px; gap: 4px; font-size: 10px; white-space: nowrap; overflow: hidden; }
.lineopt b { height: 3px; background: #000; flex: none; }
.swatch-light { width: 20px; background: #e9e9e9; flex: none; }
.input { height: 21px; flex: none; background: #474747; border: 1px solid #5a5a5a; border-radius: 3px; color: #ececec; line-height: 20px; padding-left: 3px; font-size: 10.500px; white-space: nowrap; }
.link { width: 24px; height: 25px; background: #2d2d2d; border-radius: 3px; display: flex; align-items: center; justify-content: center; flex: none; }
.link svg { width: 9px; height: 19px; }
.ic8 { width: 8px; height: 14px; } .ic13 { width: 13px; height: 13px; } .ic14 { width: 14px; height: 8px; }
.ic16 { width: 16px; height: 17px; } .ic17 { width: 17px; height: 15px; } .ic20 { width: 25px; height: 18px; }
.rgt1 { margin-right: 12px; } .rgt2 { margin-right: 6px; } .rgt3 { margin-right: 20px; } .rgt4 { margin-right: 14px; }

.ml5 { margin-left: 5px; } .ml6 { margin-left: 6px; } .ml7 { margin-left: 7px; } .ml8 { margin-left: 8px; } .ml9 { margin-left: 9px; }
.ml10 { margin-left: 10px; } .ml11 { margin-left: 11px; } .ml12 { margin-left: 12px; } .ml13 { margin-left: 13px; } .ml14 { margin-left: 14px; } .ml15 { margin-left: 15px; } .ml19 { margin-left: 19px; }
.w26 { width: 26px; } .w27 { width: 27px; } .w31 { width: 31px; } .w34 { width: 34px; } .w37 { width: 37px; } .w39 { width: 39px; } .w42 { width: 42px; } .w45 { width: 45px; } .w50 { width: 50px; } .w53 { width: 53px; } .w62 { width: 62px; } .w64 { width: 64px; } .w69 { width: 69px; } .w82 { width: 82px; } .w86 { width: 86px; } .w87 { width: 87px; } .w89 { width: 89px; } .w105 { width: 105px; } .w107 { width: 107px; } .w138 { width: 138px; }

/* main */
.main { flex: 1; display: flex; min-height: 0; }
.tools { width: 73px; flex: none; border-right: 2px solid #404040; position: relative; display: flex; flex-direction: column; background: #535353; }
.tools-head { height: 12px; background: #3f3f3f; color: #aaa; font-size: 8px; line-height: 12px; padding-left: 6px; margin-top: 2px; }
.arrows { letter-spacing: -1px; }
.grip { display: block; height: 4px; background: repeating-linear-gradient(90deg, #2e2e2e 0 1px, transparent 1px 2px); }
.g-tools { width: 18px; margin: 4px 0 0 26px; }
.toolgrid { display: grid; grid-template-columns: 31px 31px; grid-auto-rows: 24px; margin: 10px 0 0 6px; }
.tool { position: relative; display: flex; align-items: center; justify-content: center; border-radius: 3px; }
.tool.on { background: #2f2f2f; margin: 1px 2px 1px 1px; }
.tool svg { width: 19px; height: 19px; }
.tool u { position: absolute; right: 3px; bottom: 2px; width: 0; height: 0; border-left: 3px solid transparent; border-bottom: 3px solid #ccc; }
.rule { height: 1px; background: #3f3f3f; margin: 0 6px; }
.fillstroke { position: relative; height: 53px; margin-top: 6px; }
.fs-fill { position: absolute; left: 6px; top: 0; width: 36px; height: 36px; background: #fff; border: 1px solid #000; }
.fs-fill svg { width: 100%; height: 100%; }
.fs-stroke { position: absolute; left: 25px; top: 19px; width: 35px; height: 35px; background: #000; border: 1px solid #eee; display: flex; align-items: center; justify-content: center; }
.fs-stroke i { width: 17px; height: 17px; background: #555; border: 1px solid #eee; }
.fs-swap { position: absolute; left: 51px; top: 1px; width: 12px; height: 12px; }
.fs-def { position: absolute; left: 6px; top: 41px; width: 12px; height: 12px; }
.fs-def em { position: absolute; right: 0; bottom: 0; width: 8px; height: 8px; background: #333; border: 1px solid #eee; outline: 1px solid #000; }
.fs-def b { position: absolute; left: 0; top: 0; width: 8px; height: 8px; background: #fff; border: 1px solid #000; z-index: 1; }
.segs { display: flex; width: 58px; margin-left: 6px; border-radius: 3px; background: #4d4d4d; }
.segs span { flex: 1; display: flex; align-items: center; justify-content: center; border-left: 1px solid #434343; }
.segs span:first-child { border-left: 0; }
.segs .seg-on { background: #3a3a3a; }
.colormodes { height: 21px; margin-top: 7px; }
.colormodes i { width: 13px; height: 13px; border: 1px solid #000; display: block; }
.cm-yellow { background: #ff0; }
.cm-grad { background: linear-gradient(90deg, #fff, #333); }
.cm-none { background: #fff; }
.cm-none svg { width: 100%; height: 100%; }
.drawmodes { height: 18px; margin-top: 4px; border: 1px solid #5d5d5d; }
.drawmodes svg { width: 13px; height: 13px; }
.screenmode { width: 22px; height: 16px; margin: 10px 0 0 25px; }
.more { display: flex; gap: 2px; margin: 22px 0 0 29px; }
.more i { width: 3px; height: 3px; border-radius: 50%; background: #bbb; }
.glow { position: absolute; left: 14px; bottom: -6px; width: 14px; height: 10px; border-radius: 50%; background: #a34a3f; filter: blur(3px); }

/* document */
.doc { width: 1525px; flex: none; display: flex; flex-direction: column; }
.tabrow { height: 29px; flex: none; background: #424242; padding-top: 1px; }
.tab { width: 240px; height: 28px; background: #535353; display: flex; align-items: center; padding-left: 10px; color: #ececec; justify-content: space-between; padding-right: 7px; font-size: 11.500px; white-space: nowrap; }
.tab b { font-size: 15px; font-weight: 700; color: #ddd; }
.docbody { flex: 1; display: flex; min-height: 0; }
.docmain { width: 1508px; flex: none; display: flex; flex-direction: column; }
.rulerrow { height: 17px; flex: none; display: flex; background: #323232; }
.corner { width: 17px; flex: none; border-right: 1px solid #666; background: linear-gradient(#777,#777) 0 10px / 100% 1px no-repeat, linear-gradient(#777,#777) 8px 0 / 1px 100% no-repeat; }
.hruler { flex: 1; display: flex; overflow: hidden; }
.hruler span { width: 50px; flex: none; height: 17px; color: #bdbdbd; font-size: 9.500px; line-height: 12px; padding: 3px 0 0 2px; letter-spacing: .4px;
  background: linear-gradient(90deg, #999 1px, transparent 1px) 0 0 / 1px 100% no-repeat, linear-gradient(90deg, #777 1px, transparent 1px) 0 100% / 10px 3px repeat-x; }
.hruler .hfirst { width: 31px; background-position: 0 0, 1px 100%; }
.canvasrow { flex: 1; display: flex; min-height: 0; }
.vruler { width: 17px; flex: none; overflow: hidden; background: #323232; }
.vinner { margin-top: -29px; }
.vinner span { display: flex; flex-direction: column; justify-content: flex-end; height: 50px; width: 17px; padding-left: 2px; padding-right: 7px; color: #bdbdbd; font-size: 10px; line-height: 12.500px; word-break: break-all; text-align: center;
  background: linear-gradient(#999 1px, transparent 1px) 0 0 / 100% 1px no-repeat, linear-gradient(#777 1px, transparent 1px) 100% 0 / 4px 10px repeat-y; }
.canvas { flex: 1; position: relative; overflow: hidden; background: #5f5f5f; border-top: 0; }
.cs { position: absolute; top: 39px; width: 46px; height: 46px; }
.cs1 { left: 30px; background: #fefef2; }
.cs2 { left: 100px; background: #5ffff3; }
.cs3 { left: 170px; background: #141645; }
.cs4 { left: 239px; background: #ffff1a; }
.artboard { position: absolute; left: 31px; top: 121px; width: 1367px; height: 769px; background: #fefef2; border: 1px solid #000; }
.ailogo { position: absolute; left: 29px; top: 31px; width: 86px; height: 88px; background: #1e0a00; border: 4px solid #f47b20; color: #ff7f18; font: 600 55px/72px "Open Sans", sans-serif; text-align: center; letter-spacing: -1px; }
.innerbox { position: absolute; left: 32px; top: 129px; width: 1296px; height: 461px; border: 1.500px solid #55554f; }
.klogo { position: absolute; left: 1181px; top: 603px; width: 100px; height: 100px; border-radius: 50%; background: #1e0a00; border: 6px solid #ff7f18; }
.klogo span { position: absolute; left: 24px; top: 18px; color: #ff7f18; font: italic 700 50px/50px "DejaVu Sans", sans-serif; }
.klogo i { position: absolute; border-radius: 50%; background: #fff; }
.b1 { left: 12px; top: 8px; width: 18px; height: 18px; }
.b2 { left: 6px; top: 35px; width: 10px; height: 10px; }
.kname { position: absolute; left: 1107px; top: 706px; color: #1e0a00; font: italic 700 27px/36px "DejaVu Sans", sans-serif; white-space: nowrap; }
.overlay { position: absolute; left: 0; top: 0; width: 1491px; height: 923px; pointer-events: none; }

.floatpanel { position: absolute; left: 1434px; top: 17px; width: 39px; height: 110px; background: #535353; border: 1px solid #3a3a3a; border-radius: 3px 3px 0 0; display: flex; flex-direction: column; align-items: center; }
.fp-head { width: 100%; height: 14px; background: #424242; display: flex; justify-content: space-between; padding: 0 4px; color: #ccc; font-size: 8px; line-height: 13px; align-items: center; }
.fp-head b { font-size: 13px; font-weight: 700; }
.g-fp { width: 18px; height: 3px; margin-top: 4px; }
.fp-ic { width: 18px; height: 20px; margin-top: 5px; }
.fp-club { font-size: 24px; line-height: 28px; color: #b5b5b5; font-family: "DejaVu Sans", sans-serif; margin-top: 2px; }
.fp-last { width: 17px; height: 17px; margin-top: 3px; }

.dialog { position: absolute; left: 1070px; top: 217px; width: 389px; height: 266px; border: 1px solid #0c0c0c; border-radius: 5px 5px 0 0; background: linear-gradient(#97b3d2, #b8d0ea 12%, #b8d0ea 25%, #dbe8f5 44%, #b6cee8 45%); padding: 0 7px 7px; display: flex; flex-direction: column; color: #d0d0d0; font-size: 12px; }
.dlg-title { height: 28px; flex: none; color: #111; font-size: 12px; line-height: 33px; padding-left: 3px; }
.dlg-body { flex: 1; background: #535353; padding: 30px 15px 0 15px; display: flex; flex-direction: column; }
.fieldset { position: relative; height: 95px; border: 1px solid #494949; border-radius: 3px; flex: none; }
.legend { position: absolute; left: 9px; top: -7px; background: #535353; padding: 0 1px; color: #bbb; line-height: 14px; }
.anglerow { display: flex; align-items: center; padding: 18px 0 0 21px; height: 53px; }
.anglelbl { width: 44px; color: #bdbdbd; }
.dial { width: 34px; height: 34px; margin-left: -1px; }
.angleinput { width: 58px; height: 20px; background: #474747; border: 1px solid #5a5a5a; border-radius: 3px; margin-left: 9px; color: #ececec; padding-left: 4px; line-height: 18px; font-size: 12.500px; }
.optrow { display: flex; align-items: center; padding: 10px 0 0 9px; height: 28px; }
.optlbl { width: 57px; color: #bdbdbd; letter-spacing: -.1px; }
.optdis { color: #767676; white-space: nowrap; margin-left: 5px; }
.chk { width: 12px; height: 12px; border-radius: 2px; flex: none; display: block; }
.chk svg { width: 12px; height: 12px; }
.chk-dis { background: #6f6f6f; }
.chk-empty { border: 1px solid #6d6d6d; margin-left: 12px; }
.redbox { position: absolute; left: 9px; top: 6px; width: 187px; height: 57px; border: 3px solid #f00; }
.prevrow { display: flex; align-items: center; gap: 5px; margin: 12px 0 0 1px; height: 13px; color: #e2e2e2; font-size: 11.500px; }
.chk-blue { background: #3d8fe4; }
.btnrow { display: flex; margin-top: 23px; }
.btn { width: 92px; height: 26px; border: 1px solid #e4e4e4; border-radius: 13px; text-align: center; line-height: 24px; color: #eaeaea; font-size: 12px; }
.btn:first-child { margin-right: 62px; }
.btn-def { border-width: 2px; line-height: 22px; margin-right: 5px; }

.status { height: 16px; flex: none; display: flex; align-items: stretch; background: #535353; font-size: 10.500px; color: #ddd; position: relative; border-top: 1px solid #4a4a4a; padding-left: 5px; }
.st-zoom { width: 50px; background: #474747; line-height: 16px; padding-left: 3px; }
.st-drop { width: 18px; display: flex; align-items: center; justify-content: center; }
.st-nav { width: 42px; display: flex; align-items: center; justify-content: center; }
.st-nav svg { width: 22px; height: 9px; }
.st-page { width: 41px; background: #474747; padding-left: 3px; line-height: 16px; }
.nav2 { width: 43px; }
.st-tool { width: 199px; text-align: center; color: #c4c4c4; line-height: 15px; border-left: 1px solid #4a4a4a; border-right: 1px solid #4a4a4a; }
.st-tri { width: 0; height: 0; align-self: center; margin-left: 7px; border-left: 5px solid #c4c4c4; border-top: 4px solid transparent; border-bottom: 4px solid transparent; }
.st-left { margin-left: 15px; color: #999; font-size: 14px; line-height: 12px; }
.st-thumb { position: absolute; left: 959px; top: 1px; width: 24px; height: 13px; border-radius: 7px; background: #666; }
.st-right { position: absolute; right: 6px; top: 0; color: #999; font-size: 14px; line-height: 12px; }
.vscroll { width: 17px; flex: none; background: #4a4a4a; position: relative; }
.vs-up { position: absolute; left: 4px; top: 8px; color: #888; }
.vs-thumb { position: absolute; left: 1px; top: 457px; width: 15px; height: 24px; border-radius: 8px; background: #666; }
.vs-down { position: absolute; left: 4px; top: 930px; color: #888; }

/* dock */
.dock { flex: 1; background: #424242; display: flex; flex-direction: column; min-width: 0; padding-left: 1px; }
.dock-head { height: 12px; flex: none; position: relative; color: #bbb; font-size: 8px; line-height: 12px; }
.dock-head span { position: absolute; letter-spacing: -1px; }
.da1 { left: 24px; } .da2 { left: 64px; } .da3 { right: 6px; }
.dock-cols { flex: 1; display: flex; gap: 2px; min-height: 0; }
.icol { width: 38px; flex: none; background: #535353; border-left: 1px solid #3d3d3d; border-right: 1px solid #3d3d3d; }
.col2 { width: 38px; }
.igroup { display: flex; flex-direction: column; align-items: center; border-bottom: 1px solid #3a3a3a; padding-top: 4px; }
.igroup .grip { width: 18px; height: 3px; flex: none; margin-bottom: 8px; }
.h41 { height: 41px; } .h69 { height: 69px; } .h97 { height: 97px; }
.di { width: 17px; height: 17px; }
.mt8 { margin-top: 11px; }
.di-a { font: 22px/22px "Liberation Sans", sans-serif; color: #b9b9b9; position: relative; padding-right: 2px; }
.di-a u { display: inline-block; width: 1px; height: 19px; background: #bbb; margin-left: 1px; }
.di-p { font: 700 20px/24px "Liberation Serif", serif; color: #b9b9b9; margin-top: 3px; }
.di-o { font: italic 24px/24px "Liberation Serif", serif; color: #aaa; margin-top: 3px; }
.panels { flex: 1; min-width: 0; display: flex; flex-direction: column; gap: 2px; }
.ptabs { height: 27px; flex: none; display: flex; align-items: stretch; background: #444; }
.ptab { display: flex; align-items: center; justify-content: center; color: #a8a8a8; font-weight: 500; font-size: 10.500px; flex: none; border-right: 1px solid #3a3a3a; letter-spacing: -.1px; padding-top: 3px; }
.ptab.on { background: #535353; color: #eee; }
.ptab em { color: #aaa; margin-right: 3px; font-size: 9px; }
.burger { width: 10px; height: 8px; margin: 9px 6px 0 0; color: #c4c4c4; align-self: flex-start; }
.swatches { height: 724px; flex: none; background: #535353; display: flex; flex-direction: column; }
.sw-top { height: 42px; flex: none; display: flex; justify-content: space-between; padding: 7px 5px 0 6px; }
.mini { position: relative; width: 30px; height: 30px; }
.mini-f { position: absolute; left: 0; top: 0; width: 20px; height: 20px; background: #fff; border: 1px solid #000; z-index: 1; }
.mini-f svg { width: 100%; height: 100%; }
.mini-s { position: absolute; left: 10px; top: 10px; width: 19px; height: 19px; background: #000; border: 1px solid #fff; display: flex; align-items: center; justify-content: center; }
.mini-s i { width: 10px; height: 10px; border: 1px solid #fff; background: #444; }
.viewbtns { display: flex; width: 49px; height: 24px; border: 1px solid #5f5f5f; border-radius: 3px; }
.viewbtns span { flex: 1; display: flex; align-items: center; justify-content: center; }
.viewbtns .on { background: #333; }
.viewbtns svg { width: 14px; height: 14px; }
.sw-box { flex: 1; margin: 0 5px 0 6px; border: 1px solid #4a4a4a; }
.swgrid { display: grid; grid-template-columns: repeat(15, 14px); grid-auto-rows: 14px; }
.swgrid span { display: block; margin: 0 1px 1px 0; }
.swgrid svg { width: 100%; height: 100%; }
.s-none { background: #fff; border: 1px solid #000; }
.s-reg { background: #fff; }
.s-split { background: linear-gradient(135deg, #f7067f 50%, #fff 50%, #fff 58%, #000 58%); }
.s-gbw { background: linear-gradient(90deg, #fff, #000, #fff); }
.s-gbl { background: linear-gradient(90deg, #036, #0bf, #fff); }
.s-chk { background: repeating-conic-gradient(#f7a8c8 0 25%, #fff 0 50%) 0 0 / 5px 5px; }
.s-rad { background: radial-gradient(circle, #fff0b0, #f7931e 70%); }
.s-dots { background: #ddd radial-gradient(circle, #fff 45%, #c9a84a 50%, #bbb 55%); }
.s-pblue { background: repeating-conic-gradient(#0a5c90 0 25%, #33b0d8 0 50%) 0 0 / 4px 4px; }
.s-pgreen { background: repeating-conic-gradient(#a8d8b0 0 25%, #d8e8a0 0 50%) 0 0 / 4px 4px; }
.swgroup { display: flex; height: 13px; margin-top: 3px; }
.swgroup span { width: 13px; margin-right: 1px; }
.fold { width: 14px; height: 13px; }
.sw-foot { height: 24px; flex: none; display: flex; align-items: center; border-bottom: 1px solid #3a3a3a; }
.sw-foot svg { width: 14px; height: 12px; }
.fnt { opacity: .6; }
.stroke { height: 216px; flex: none; background: #535353; font-size: 10.500px; }
.stroke .ptabs { height: 26px; }
.st-row { display: flex; align-items: center; }
.st-row label { width: 63px; flex: none; text-align: right; margin-right: 4px; color: #bcbcbc; white-space: nowrap; letter-spacing: -.1px; }
.r1 { margin-top: 7px; height: 20px; }
.r1 .combo { height: 20px; }
.r2 { margin-top: 6px; height: 21px; }
.seg3 { display: flex; width: 67px; height: 21px; border: 1px solid #5f5f5f; border-radius: 3px; flex: none; }
.seg3 span { flex: 1; display: flex; align-items: center; justify-content: center; border-left: 1px solid #5f5f5f; }
.seg3 span:first-child { border-left: 0; }
.seg3 .on { background: #2e2e2e; }
.seg3 svg { width: 13px; height: 13px; }
.st-row .lim { width: auto; margin: 0 4px 0 21px; }
.lim-i { width: 38px; height: 20px; line-height: 18px; background: #404040; }
.lim-x { margin-left: 6px; color: #bbb; }
.st-div { height: 1px; background: #474747; margin: 6px 5px 0 5px; }
.dashrow { display: flex; align-items: center; height: 21px; margin-top: 6px; padding: 0 5px 0 6px; }
.chk-plain { border: 1px solid #bbb; border-radius: 2px; }
.dashlbl { margin-left: 6px; color: #ddd; }
.dashbtns { display: flex; width: 77px; height: 21px; border: 1px solid #5f5f5f; border-radius: 3px; }
.dashbtns span { flex: 1; display: flex; align-items: center; justify-content: center; border-left: 1px solid #5f5f5f; }
.dashbtns span:first-child { border-left: 0; }
.dashbtns svg { width: 28px; height: 12px; }
.dashgrid { display: flex; gap: 4px; padding: 6px 5px 0 5px; }
.dashgrid div { width: 35px; text-align: center; color: #777; }
.dashgrid i { display: block; height: 21px; background: #5a5a5a; margin-bottom: 3px; border-radius: 2px; }
.bottomtabs { height: 28px; flex: none; }
```
